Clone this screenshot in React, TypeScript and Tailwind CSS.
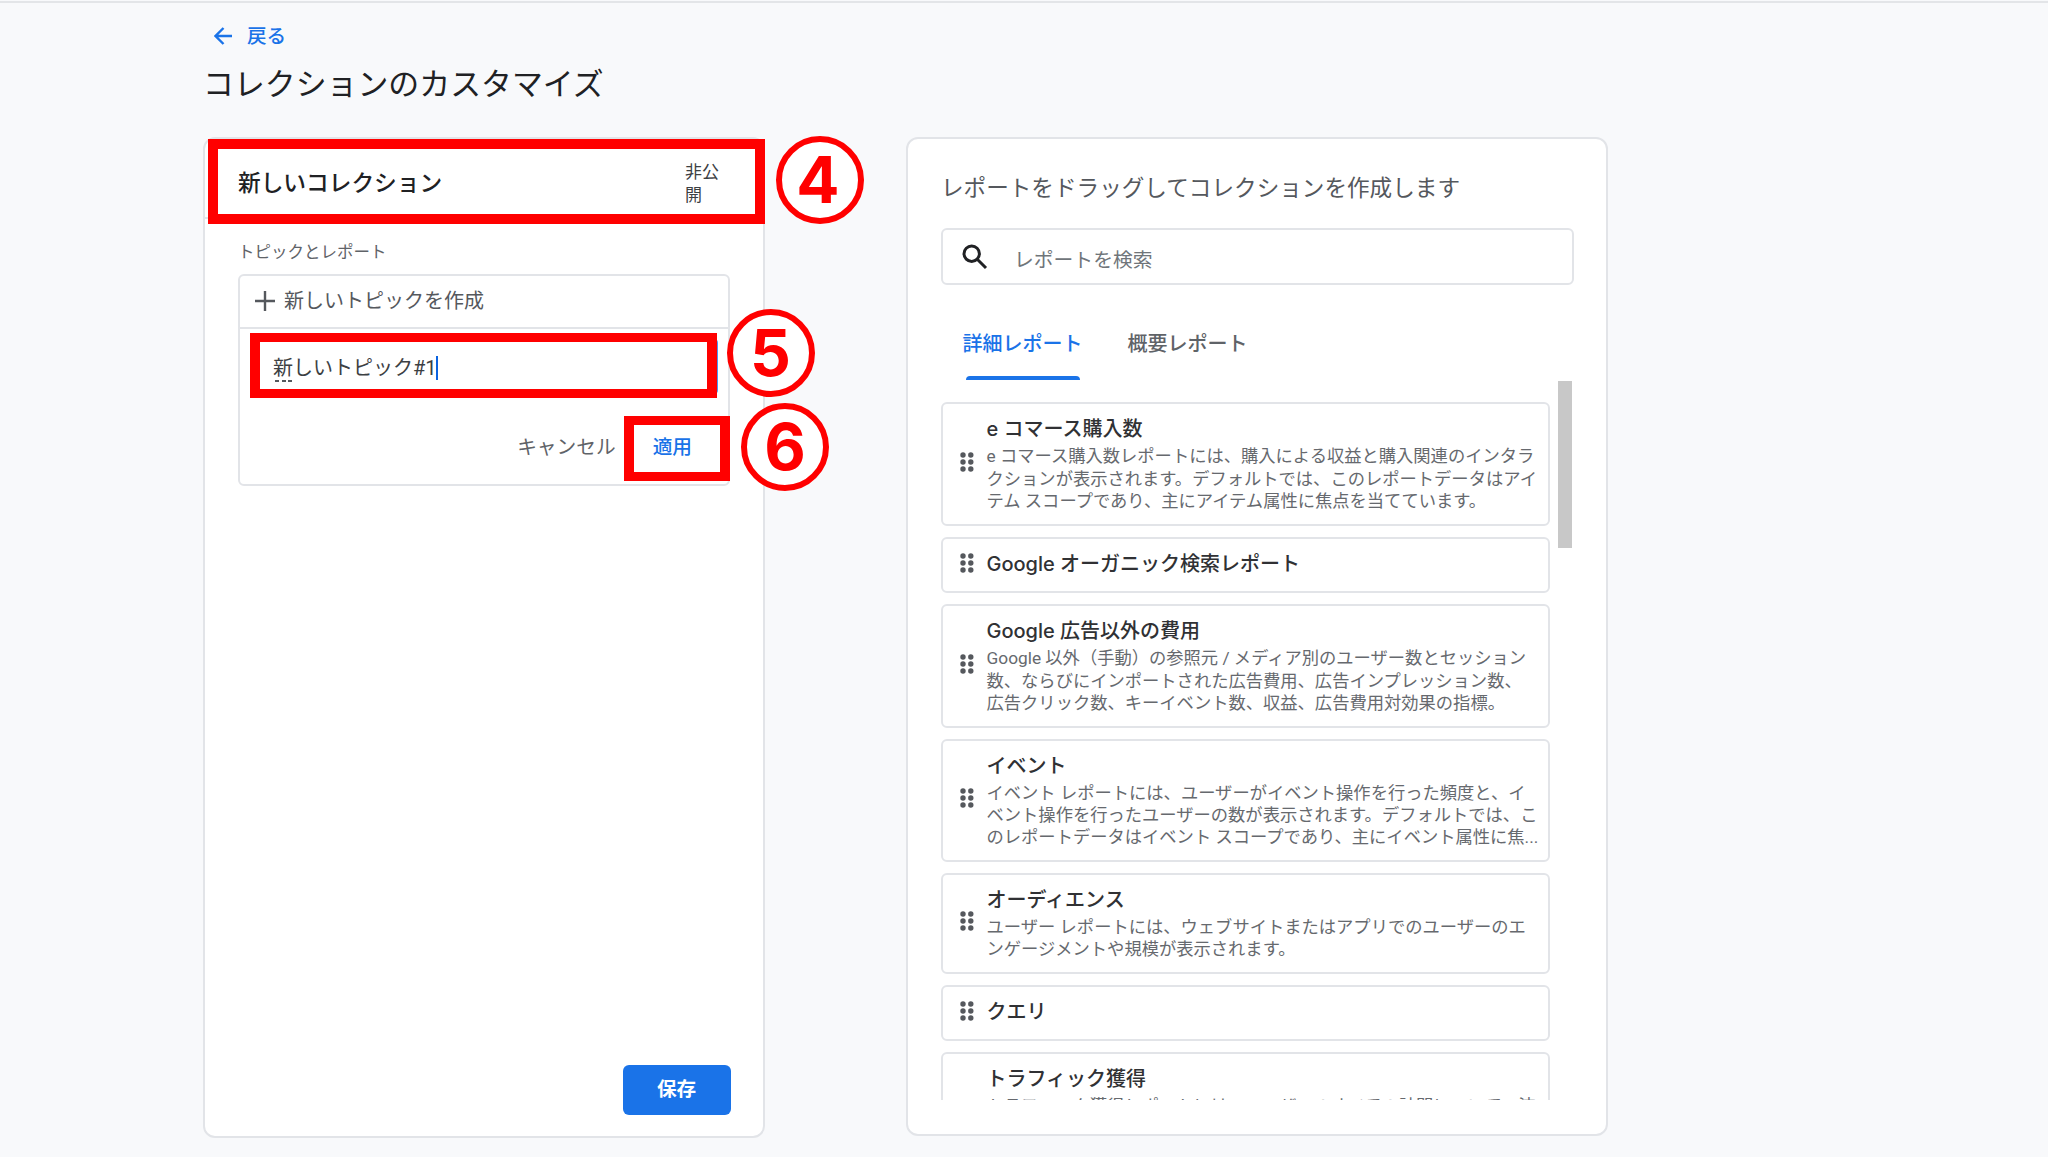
import { clsx } from "clsx";

const reports = [
  {
    title: "e コマース購入数",
    lines: [
      "e コマース購入数レポートには、購入による収益と購入関連のインタラ",
      "クションが表示されます。デフォルトでは、このレポートデータはアイ",
      "テム スコープであり、主にアイテム属性に焦点を当てています。",
    ],
    height: "h-[123.5px]",
  },
  { title: "Google オーガニック検索レポート", lines: [], height: "h-[56.5px]" },
  {
    title: "Google 広告以外の費用",
    lines: [
      "Google 以外（手動）の参照元 / メディア別のユーザー数とセッション",
      "数、ならびにインポートされた広告費用、広告インプレッション数、",
      "広告クリック数、キーイベント数、収益、広告費用対効果の指標。",
    ],
    height: "h-[124px]",
  },
  {
    title: "イベント",
    lines: [
      "イベント レポートには、ユーザーがイベント操作を行った頻度と、イ",
      "ベント操作を行ったユーザーの数が表示されます。デフォルトでは、こ",
      "のレポートデータはイベント スコープであり、主にイベント属性に焦...",
    ],
    height: "h-[122.5px]",
  },
  {
    title: "オーディエンス",
    lines: [
      "ユーザー レポートには、ウェブサイトまたはアプリでのユーザーのエ",
      "ンゲージメントや規模が表示されます。",
    ],
    height: "h-[101px]",
  },
  { title: "クエリ", lines: [], height: "h-[56px]" },
  {
    title: "トラフィック獲得",
    lines: [
      "トラフィック獲得レポートには、ユーザーのすべての訪問について、流",
      "入元のメディアや参照元が表示されます。",
      "デフォルトでは、セッション スコープです。",
    ],
    height: "h-[124px]",
  },
];

function DragHandle() {
  return (
    <svg viewBox="0 0 14 20" className="h-5 w-3.5 shrink-0 fill-[#55585d]">
      {[3, 10, 17].map((y) => (
        <g key={y}>
          <circle cx="3" cy={y} r="2.7" />
          <circle cx="10.8" cy={y} r="2.7" />
        </g>
      ))}
    </svg>
  );
}

function StepNumber({ value, className }: { value: number; className: string }) {
  return (
    <div
      className={clsx(
        "absolute flex size-[88px] items-center justify-center rounded-full border-6 border-[#ff0000] bg-white font-['Inter',sans-serif] text-[64px] leading-none font-bold text-[#ff0000]",
        className,
      )}
    >
      {value}
    </div>
  );
}

function CollectionPanel() {
  return (
    <section className="relative flex h-[1001px] w-[562px] shrink-0 flex-col rounded-xl border-2 border-[#e2e4e8] bg-white">
      <div className="flex h-[80px] shrink-0 items-center justify-between border-b-2 border-[#e2e4e8] pr-[42px] pl-[33px]">
        <h2 className="mt-3 text-[22.7px] font-medium text-[#202124]">新しいコレクション</h2>
        <p className="mt-[11px] w-[36px] text-[17px] leading-[22.4px] text-[#3c4043]">非公開</p>
      </div>

      <p className="mt-[23px] ml-[33px] text-[16.5px] leading-[22px] text-[#5f6368]">トピックとレポート</p>

      <div className="mt-[10px] ml-[33px] h-[212px] w-[492px] rounded-md border-2 border-[#e2e4e8]">
        <div className="flex h-[53px] items-center border-b-2 border-[#e2e4e8] pb-[2px] pl-[15px] text-[20px] text-[#55585d]">
          <svg viewBox="0 0 20 20" className="mr-[9px] size-5 stroke-current" strokeWidth="2.4">
            <path d="M10 0v20M0 10h20" />
          </svg>
          新しいトピックを作成
        </div>
        <div className="mt-[10px] ml-[10px] flex h-[55px] w-[468px] items-center rounded border-2 border-[#4a95f5] pt-[2px] pl-[21px] text-[20px] text-[#3c4043]">
          <span className="relative">
            新
            <span className="absolute bottom-[1px] left-[2px] flex w-[17px] justify-between">
              <span className="h-[2px] w-[4px] bg-[#55585d]" />
              <span className="h-[2px] w-[4px] bg-[#55585d]" />
              <span className="h-[2px] w-[4px] bg-[#55585d]" />
            </span>
          </span>
          しいトピック#1
          <span className="-ml-px h-[24px] w-[2.5px] bg-[#0b63e0]" />
        </div>
        <div className="mt-[40px] flex justify-end gap-[37px] pr-[36px] text-[19.7px] leading-[28px]">
          <button className="text-[#5f6368]">キャンセル</button>
          <button className="font-medium text-[#1a73e8]">適用</button>
        </div>
      </div>

      <button className="mt-auto mr-[32.5px] mb-[21.5px] h-[50px] w-[108px] self-end rounded-md bg-[#1a73e8] text-[19.6px] font-bold text-white">
        保存
      </button>

      {/* Step highlights */}
      <div className="absolute top-0 left-[3px] h-[85px] w-[557px] border-[10px] border-[#ff0000]" />
      <div className="absolute top-[194px] left-[44.5px] h-[65px] w-[467.5px] border-x-[10px] border-y-[9px] border-[#ff0000]" />
      <div className="absolute top-[277px] left-[419px] h-[65px] w-[105.5px] border-x-[10px] border-y-[9px] border-[#ff0000]" />
      <StepNumber value={4} className="top-[-3.5px] left-[571px] pr-[4px]" />
      <StepNumber value={5} className="top-[169.5px] left-[521.5px]" />
      <StepNumber value={6} className="top-[264px] left-[536px]" />
    </section>
  );
}

function ReportPanel() {
  return (
    <section className="flex h-[999px] w-[702px] shrink-0 flex-col rounded-xl border-2 border-[#e2e4e8] bg-white pl-[33px]">
      <h2 className="mt-[34px] text-[22.6px] leading-[32px] text-[#55585d]">
        レポートをドラッグしてコレクションを作成します
      </h2>

      <div className="mt-[23px] flex h-[57px] w-[633px] shrink-0 items-center rounded-md border-2 border-[#e2e4e8] pl-[19px]">
        <svg viewBox="0 0 26 26" className="size-[26px] fill-none stroke-[#202124]" strokeWidth="3">
          <circle cx="9.7" cy="9.7" r="7.7" />
          <path d="M15.5 15.5l8.5 8.5" />
        </svg>
        <span className="mt-[8px] ml-[26px] text-[19.8px] text-[#70757a]">レポートを検索</span>
      </div>

      <div className="mt-[43px] ml-[21.5px] flex h-[52px] gap-[45px] text-[20px] font-medium">
        <div className="relative h-full leading-[32px] text-[#1a73e8]">
          詳細レポート
          <span className="absolute bottom-0 left-[3px] h-1 w-[114px] rounded-t bg-[#1a73e8]" />
        </div>
        <div className="leading-[32px] text-[#5f6368]">概要レポート</div>
      </div>

      <div className="mt-px flex h-[719px] gap-2 overflow-hidden">
        <div className="mt-[21px] flex w-[609px] flex-col gap-[11px]">
          {reports.map((report) => (
            <article
              key={report.title}
              className={clsx(
                "flex shrink-0 items-center rounded-md border-2 border-[#e2e4e8] pb-[4px] pl-[17px]",
                report.height,
              )}
            >
              <DragHandle />
              <div className="mt-[3px] ml-[12.5px] whitespace-nowrap">
                <h3 className="font-['Inter','Noto_Sans_CJK_JP',sans-serif] text-[20px] leading-[31px] font-medium text-[#303134]">
                  {report.title}
                </h3>
                {report.lines.map((line) => (
                  <p key={line} className="text-[17.3px] leading-[22.4px] text-[#66696e]">
                    {line}
                  </p>
                ))}
              </div>
            </article>
          ))}
        </div>
        <div className="h-[167px] w-[14px] bg-[#c8c8c8]" />
      </div>
    </section>
  );
}

export default function App() {
  return (
    <div className="flow-root h-[1157px] w-[2048px] overflow-hidden bg-[#f8f9fb] font-['Roboto','Noto_Sans_CJK_JP',sans-serif]">
      <div className="mt-px h-[2px] bg-[#e3e5e8]" />
      <header className="pl-[203px]">
        <a className="mt-[20px] ml-[11px] flex h-[28px] items-center text-[19.6px] font-medium text-[#1a73e8]">
          <svg viewBox="0 0 18 18" className="mr-[15px] mb-[2px] size-[18px] fill-none stroke-current" strokeWidth="2.4">
            <path d="M18 9H2M9.5 1L1.5 9l8 8" />
          </svg>
          戻る
        </a>
        <h1 className="mt-[12px] text-[30.9px] leading-[44px] text-[#202124]">コレクションのカスタマイズ</h1>
      </header>
      <main className="mt-[30px] flex items-start gap-[141px] pl-[203px]">
        <CollectionPanel />
        <ReportPanel />
      </main>
    </div>
  );
}
